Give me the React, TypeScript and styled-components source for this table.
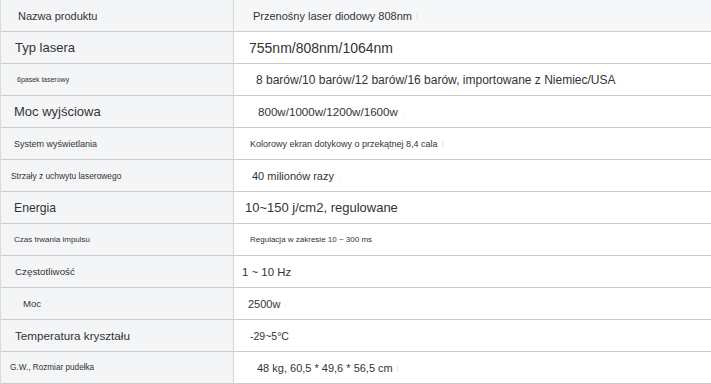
import React from 'react';
import styled, {createGlobalStyle} from 'styled-components';

const GlobalStyle = createGlobalStyle`
  html, body {
    margin: 0;
    padding: 0;
    background: #ffffff;
  }
  body {
    font-family: "Liberation Sans", Arial, sans-serif;
    color: #333333;
    overflow: hidden;
  }
`

type Spec = {
    label: string;
    labelSize: number;
    labelPad: number;
    labelMark?: string;
    value: string;
    valueSize: number;
    valuePad: number;
    valueMark?: string;
}

const specs: Spec[] = [
    {label: 'Nazwa produktu', labelSize: 11, labelPad: 17, labelMark: ',', value: 'Przenośny laser diodowy 808nm', valueSize: 11, valuePad: 19, valueMark: '|'},
    {label: 'Typ lasera', labelSize: 13, labelPad: 14, value: '755nm/808nm/1064nm', valueSize: 14, valuePad: 15, valueMark: '.'},
    {label: '6pasek laserowy', labelSize: 7, labelPad: 16, labelMark: "'", value: '8 barów/10 barów/12 barów/16 barów, importowane z Niemiec/USA', valueSize: 12, valuePad: 22, valueMark: '.'},
    {label: 'Moc wyjściowa', labelSize: 13, labelPad: 13, labelMark: ',', value: '800w/1000w/1200w/1600w', valueSize: 11.6, valuePad: 24, valueMark: ','},
    {label: 'System wyświetlania', labelSize: 9, labelPad: 13, value: 'Kolorowy ekran dotykowy o przekątnej 8,4 cala', valueSize: 9, valuePad: 16, valueMark: '|'},
    {label: 'Strzały z uchwytu laserowego', labelSize: 8.4, labelPad: 10, labelMark: ',', value: '40 milionów razy', valueSize: 11, valuePad: 18, valueMark: ','},
    {label: 'Energia', labelSize: 12.2, labelPad: 13, value: '10~150 j/cm2, regulowane', valueSize: 13, valuePad: 11},
    {label: 'Czas trwania impulsu', labelSize: 8, labelPad: 13, value: 'Regulacja w zakresie 10 ~ 300 ms', valueSize: 8, valuePad: 16},
    {label: 'Częstotliwość', labelSize: 9.8, labelPad: 14, value: '1 ~ 10 Hz', valueSize: 11.4, valuePad: 8},
    {label: 'Moc', labelSize: 9.5, labelPad: 22, labelMark: "'", value: '2500w', valueSize: 11, valuePad: 14, valueMark: ','},
    {label: 'Temperatura kryształu', labelSize: 11.7, labelPad: 14, labelMark: '.', value: '-29~5°C', valueSize: 10.5, valuePad: 16, valueMark: ','},
    {label: 'G.W., Rozmiar pudełka', labelSize: 8.2, labelPad: 9, value: '48 kg, 60,5 * 49,6 * 56,5 cm', valueSize: 11, valuePad: 23, valueMark: '|'},
];

function App() {
    return (
        <>
            <GlobalStyle/>
            <Table>
                {specs.map((row, i) => (
                    <Row key={row.label} $head={i === 0}>
                        <LabelCell $size={row.labelSize} $pad={row.labelPad}>
                            {row.label}
                            {row.labelMark && <Mark>{row.labelMark}</Mark>}
                        </LabelCell>
                        <ValueCell $size={row.valueSize} $pad={row.valuePad}>
                            {row.value}
                            {row.valueMark && <Mark>{row.valueMark}</Mark>}
                        </ValueCell>
                    </Row>
                ))}
            </Table>
        </>
    );
}

export default App;

const Table = styled.div`
  display: flex;
  flex-direction: column;
  width: 711px;
  border-left: 1px solid #dcdcdc;
  box-sizing: border-box;
`

const Row = styled.div<{ $head: boolean }>`
  display: grid;
  grid-template-columns: 233px 1fr;
  height: 32px;
  box-sizing: border-box;
  border-bottom: 1px solid #cdcdcd;
  background-color: ${p => (p.$head ? '#f6f7f9' : '#ffffff')};
`

const Cell = styled.div<{ $size: number; $pad: number }>`
  display: flex;
  align-items: center;
  padding-left: ${p => p.$pad}px;
  font-size: ${p => p.$size}px;
  white-space: nowrap;
  color: #333333;
`

const LabelCell = styled(Cell)`
  background-color: #f4f5f7;
  border-right: 1px solid #d6d6d6;
`

const ValueCell = styled(Cell)``

const Mark = styled.span`
  margin-left: 4px;
  font-size: 8px;
  color: #d8d8d8;
`
